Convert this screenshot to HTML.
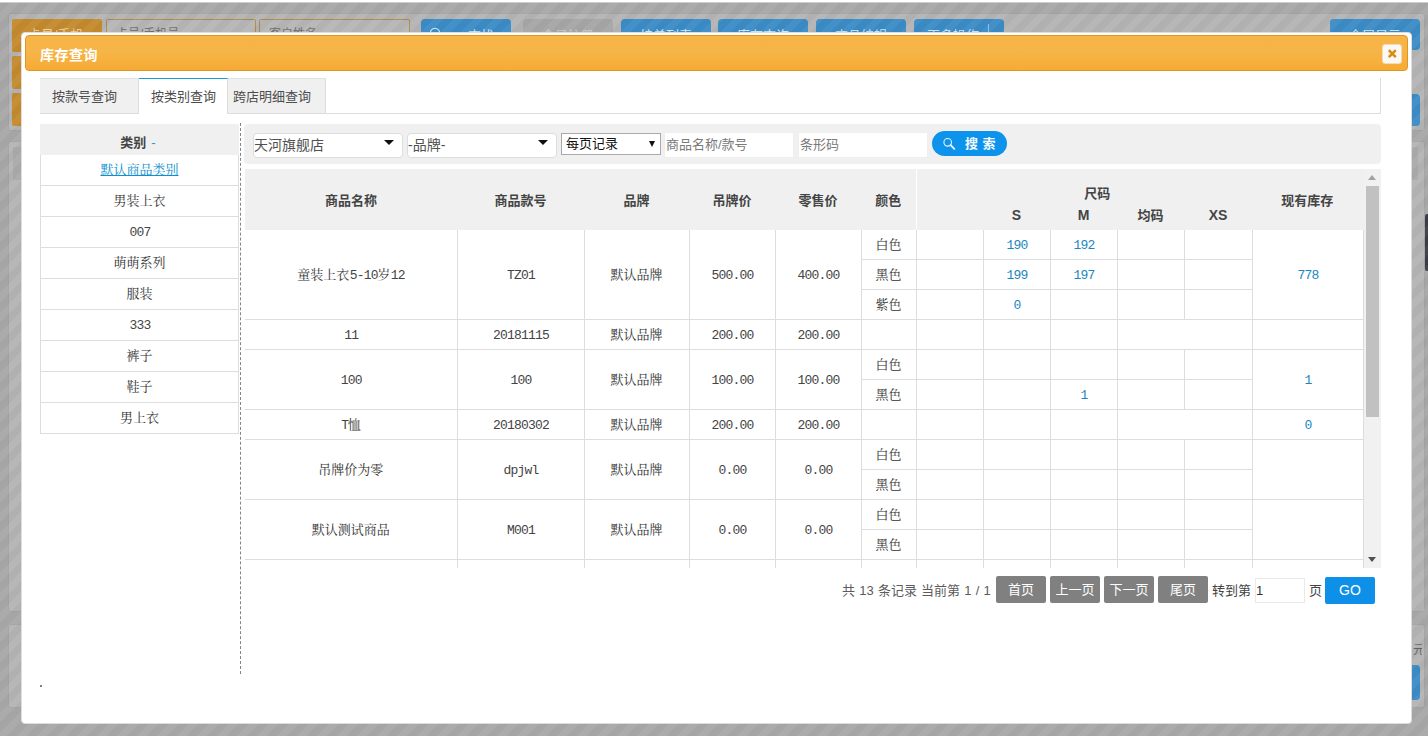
<!DOCTYPE html>
<html lang="zh-CN">
<head>
<meta charset="utf-8">
<title>库存查询</title>
<style>
*{box-sizing:border-box;margin:0;padding:0}
html,body{width:1428px;height:736px;overflow:hidden;background:#fff}
body{position:relative;font-family:"Liberation Sans","Noto Sans CJK SC",sans-serif;font-size:13px;color:#333}
.abs{position:absolute}
/* ---------- page below the overlay (already dimmed colours) ---------- */
#bg{position:absolute;left:0;top:3px;width:1428px;height:733px;background:#a8a8a8}
#bg .band{position:absolute;left:0;top:-1px;width:1428px;height:1px;background:#cdcdcd}
#bg .box{position:absolute;background:#b4b4b4;border:1px solid #a3a3a3;border-radius:3px}
#bg .ob{position:absolute;background:#c48a2e;border-radius:2px}
#bg .ip{position:absolute;background:#b6b6b6;border:1px solid #b08a4a;border-radius:2px;color:#6e6e6e;font-size:12px;line-height:14px;padding:7px 9px}
#bg .bb{position:absolute;background:#3b8cc6;border-radius:4px;color:#cfe3f1;font-size:13px;line-height:16px;text-align:center}
#bg .gb{position:absolute;background:#a6a6a6;border-radius:4px;color:#c6c6c6;font-size:13px;text-align:center}
#stripes{position:absolute;left:0;top:3px;width:1428px;height:733px;
 background:repeating-linear-gradient(135deg,rgba(0,0,0,.02) 0,rgba(0,0,0,.02) 7.07px,rgba(255,255,255,.04) 7.07px,rgba(255,255,255,.04) 14.14px)}
/* ---------- dialog ---------- */
#dlg{position:absolute;left:21px;top:32px;width:1391px;height:692px;background:#fff;border:1px solid #ddd;border-radius:4px}
#tbar{position:absolute;left:3px;top:2px;width:1383px;height:36px;border:1px solid #de9624;border-radius:4px;
 background:linear-gradient(180deg,#f7b446 0,#f6b548 45%,#f6ab34 100%);color:#fff;font-weight:bold;font-size:14px;letter-spacing:.5px;line-height:38px;padding-left:14px}
#close{position:absolute;left:1360px;top:11px;width:20px;height:20px;background:#fbf9f5;border:1px solid #f3dcae;border-radius:3px}

/* tabs */
#tabs{position:absolute;left:18px;top:45px;width:1341px;height:36px;border:1px solid #ddd;border-top:0;background:#fff}
#tabs .tab{position:absolute;top:0;height:35px;background:#f0f0f0;border-right:1px solid #ddd;border-top:1px solid #e2e2e2;color:#4d4d4d;font-size:13px;line-height:35px;text-align:left;padding-left:12px;white-space:nowrap}
#tabs .tab.on{background:#fff;border-top:1px solid #1b9ad6;height:36px}
/* category list */
#cat{position:absolute;left:18px;top:91px;width:199px}
#cat .hd{height:31px;background:#f0f0f0;text-align:center;font-weight:bold;color:#444;line-height:37px;overflow:hidden;font-size:13px;padding-right:3px}
#cat .hd span{color:#1b9ad6;font-weight:normal;margin-left:5px}
#cat ul{list-style:none;border-left:1px solid #ddd;border-right:1px solid #ddd}
#cat li{height:31px;border-bottom:1px solid #ddd;text-align:center;line-height:32px;color:#333}
#cat li a{color:#0e8fcf;text-decoration:underline}
.sim{font-family:"Liberation Mono","Noto Serif CJK SC",serif;font-size:13px}
.sim .l{letter-spacing:-.8px;position:relative;left:.6px;color:#444}
#tb td.n .l{color:#1a86c2}
#vline{position:absolute;left:218px;top:90px;width:0;height:551px;border-left:1px dashed #858585}
#dot{position:absolute;left:18px;top:652px;width:2px;height:2px;background:#555;border-radius:1px}
/* filter bar */
#flt{position:absolute;left:222px;top:91px;width:1137px;height:40px;background:#f0f0f0;border-radius:4px}
#flt .sel{position:absolute;top:9px;height:25px;width:150px;background:#fff;border:1px solid #ddd;border-radius:4px;font-size:14px;line-height:22px;padding-left:0;color:#505050}
#flt .sel:after,#flt .nsel:after{content:"";position:absolute;right:8px;top:6px;border:5px solid transparent;border-top:5px solid #111;border-bottom:0}
#flt .nsel{position:absolute;left:317px;top:9px;height:22px;width:100px;background:#fff;border:1px solid #a9a9a9;font-size:13px;line-height:19px;padding-left:4px;color:#111}
#flt .nsel:after{right:5px;top:7px;border-width:3px;border-top-width:6px}
#flt .inp{position:absolute;top:8px;height:26px;width:130px;background:#fff;border:1px solid #eee;font-size:13px;line-height:24px;padding-left:1px;color:#7a7a7a}
#flt .btn{position:absolute;left:688px;top:7px;width:75px;height:25px;background:#0d93ec;border-radius:13px;color:#f4fbff;font-size:13px;font-weight:bold;line-height:26px;padding-left:33px;letter-spacing:4.5px}

/* table */
#tw{position:absolute;left:223px;top:136px;width:1119px;height:399px;overflow:hidden}
#tb{border-collapse:collapse;table-layout:fixed;width:1118px}
#tb th{background:#f0f0f0;color:#444;font-size:13px;font-weight:bold;text-align:center;vertical-align:middle;padding:0}
#tb td{height:30px;border-right:1px solid #ddd;border-bottom:1px solid #ddd;text-align:center;vertical-align:middle;color:#333;padding:4px 0 0;line-height:16px}
#tb td.n{color:#0e8fcf}
#tb tr.f td{height:29px}
#tb tr.f td[rowspan]{height:89px}
#sb{position:absolute;left:1342px;top:136px;width:17px;height:399px;background:#f1f1f1}
#sb .th{position:absolute;left:2px;top:17px;width:13px;height:231px;background:#c1c1c1}
#sb .up{position:absolute;left:4px;top:6px;border:4px solid transparent;border-bottom:5px solid #a3a3a3;border-top:0}
#sb .dn{position:absolute;left:4px;bottom:6px;border:4px solid transparent;border-top:5px solid #505050;border-bottom:0}
/* pager */
#pg{position:absolute;left:0;top:543px;width:1391px;height:28px;font-size:13px;color:#444}
#pg span{position:absolute;top:0;line-height:30px;white-space:nowrap;word-spacing:.6px}
#pg .b{position:absolute;top:0;height:27px;width:50px;background:#808080;color:#fff;border-radius:2px;text-align:center;line-height:28px;font-size:13px}
#pg .go{position:absolute;left:1303px;top:1px;width:50px;height:27px;background:#0e90e8;color:#fff;border-radius:2px;text-align:center;line-height:27px;font-size:14px}
#pg .pi{position:absolute;left:1233px;top:2px;width:50px;height:25px;border:1px solid #e9e9e9;background:#fff;line-height:23px;padding-left:0;color:#333}
</style>
</head>
<body>
<div id="bg">
  <div class="band"></div>
  <div class="box" style="left:8px;top:10px;width:1417px;height:118px"></div>
  <div class="ob" style="left:12px;top:16px;width:90px;height:33px;color:#e6cfa6;font-size:13px;line-height:16px;padding:8px 0 0 16px">卡号/手机</div>
  <div class="ob" style="left:12px;top:53px;width:90px;height:33px"></div>
  <div class="ob" style="left:12px;top:90px;width:90px;height:33px"></div>
  <div class="ip" style="left:106px;top:16px;width:150px;height:34px">卡号/手机号</div>
  <div class="ip" style="left:259px;top:16px;width:151px;height:34px">客户姓名</div>
  <div class="bb" style="left:421px;top:16px;width:90px;height:34px;padding:9px 0 0 30px">查找<svg style="position:absolute;left:8px;top:8px" width="14" height="14" viewBox="0 0 14 14"><circle cx="6" cy="6" r="4.6" fill="none" stroke="#cfe3f1" stroke-width="1.3"/><path d="M9.5 9.5l3.5 3.5" stroke="#cfe3f1" stroke-width="1.5"/></svg></div>
  <div class="gb" style="left:523px;top:16px;width:90px;height:34px;padding-top:9px;line-height:16px">会员注册</div>
  <div class="bb" style="left:621px;top:16px;width:90px;height:34px;padding-top:9px">挂单列表</div>
  <div class="bb" style="left:718px;top:16px;width:90px;height:34px;padding-top:9px">库存查询</div>
  <div class="bb" style="left:816px;top:16px;width:90px;height:34px;padding-top:9px">商品编辑</div>
  <div class="bb" style="left:914px;top:16px;width:90px;height:34px;padding:9px 12px 0 0">更多操作<span style="position:absolute;left:74px;top:5px;width:1px;height:24px;background:#8fbbdc"></span></div>
  <div class="bb" style="left:1330px;top:16px;width:90px;height:31px;padding-top:9px">全屏显示</div>
  <div class="bb" style="left:1330px;top:91px;width:90px;height:32px"></div>
  <div class="box" style="left:8px;top:138px;width:1417px;height:471px"></div>
  <div style="position:absolute;left:13px;top:144px;width:1405px;height:33px;background:#aaa"></div>
  <div class="box" style="left:8px;top:621px;width:1417px;height:84px"></div>
  <div style="position:absolute;left:1413px;top:637px;width:9px;overflow:hidden;font-size:12px;color:#666">元</div>
  <div style="position:absolute;left:1425px;top:211px;width:6px;height:57px;background:#3d3d47;border-radius:2px"></div>
  <div class="bb" style="left:1330px;top:662px;width:90px;height:35px"></div>
</div>
<div id="stripes"></div>

<div id="dlg">
  <div id="tbar">库存查询</div>
  <div id="close"><svg width="18" height="18" viewBox="0 0 18 18" style="position:absolute;left:0;top:0"><path d="M5.8 5.2l7 7M12.8 5.2l-7 7" stroke="#de8a12" stroke-width="2.6"/></svg></div>

  <div id="tabs">
    <div class="tab" style="left:-1px;width:99px">按款号查询</div>
    <div class="tab on" style="left:98px;width:89px">按类别查询</div>
    <div class="tab" style="left:187px;width:98px;padding-left:5px">跨店明细查询</div>
  </div>
  <div id="cat">
    <div class="hd">类别<span>-</span></div>
    <ul class="sim">
      <li><a>默认商品类别</a></li>
      <li>男装上衣</li>
      <li><span class="l">007</span></li>
      <li>萌萌系列</li>
      <li>服装</li>
      <li><span class="l">333</span></li>
      <li>裤子</li>
      <li>鞋子</li>
      <li>男上衣</li>
    </ul>
  </div>
  <div id="vline"></div>
  <div id="dot"></div>
  <div id="flt">
    <div class="sel" style="left:9px">天河旗舰店</div>
    <div class="sel" style="left:163px">-品牌-</div>
    <div class="nsel">每页记录</div>
    <div class="inp" style="left:420px">商品名称/款号</div>
    <div class="inp" style="left:554px">条形码</div>
    <div class="btn">搜索<svg style="position:absolute;left:11px;top:6px" width="14" height="14" viewBox="0 0 14 14"><circle cx="4.7" cy="5.3" r="3.8" fill="none" stroke="#e8f6ff" stroke-width="1.1"/><path d="M7.6 8.1l3.7 3.7" stroke="#e8f6ff" stroke-width="1.9" stroke-linecap="round"/></svg></div>
  </div>

  <div id="tw">
  <table id="tb" class="sim">
    <colgroup><col style="width:212px"><col style="width:127px"><col style="width:105px"><col style="width:86px"><col style="width:86px"><col style="width:55px"><col style="width:67px"><col style="width:67px"><col style="width:67px"><col style="width:67px"><col style="width:68px"><col style="width:111px"></colgroup>
    <thead style="font-family:'Liberation Sans','Noto Sans CJK SC',sans-serif;letter-spacing:0">
      <tr style="height:38px"><th rowspan="2">商品名称</th><th rowspan="2">商品款号</th><th rowspan="2">品牌</th><th rowspan="2">吊牌价</th><th rowspan="2">零售价</th><th rowspan="2" style="border-right:1px solid #fff">颜色</th><th colspan="5" style="vertical-align:bottom;line-height:20px;padding:0 0 3px 26px">尺码</th><th rowspan="2" style="border-right:1px solid #f0f0f0">现有库存</th></tr>
      <tr style="height:23px"><th></th><th style="vertical-align:top;font-size:14px;padding-top:0">S</th><th style="vertical-align:top;font-size:14px;padding-top:0">M</th><th style="vertical-align:top"><span style="position:relative;top:-2px">均码</span></th><th style="vertical-align:top;font-size:14px;padding-top:0">XS</th></tr>
    </thead>
    <tbody>
<tr class="f"><td rowspan="3">童装上衣<span class="l">5-10</span>岁<span class="l">12</span></td><td rowspan="3"><span class="l">TZ01</span></td><td rowspan="3">默认品牌</td><td rowspan="3"><span class="l">500.00</span></td><td rowspan="3"><span class="l">400.00</span></td><td>白色</td><td></td><td class="n"><span class="l">190</span></td><td class="n"><span class="l">192</span></td><td></td><td></td><td rowspan="3" class="n"><span class="l">778</span></td></tr>
<tr><td>黑色</td><td></td><td class="n"><span class="l">199</span></td><td class="n"><span class="l">197</span></td><td></td><td></td></tr>
<tr><td>紫色</td><td></td><td class="n"><span class="l">0</span></td><td></td><td></td><td></td></tr>
<tr><td><span class="l">11</span></td><td><span class="l">20181115</span></td><td>默认品牌</td><td><span class="l">200.00</span></td><td><span class="l">200.00</span></td><td></td><td></td><td></td><td></td><td colspan="2"></td><td></td></tr>
<tr><td rowspan="2"><span class="l">100</span></td><td rowspan="2"><span class="l">100</span></td><td rowspan="2">默认品牌</td><td rowspan="2"><span class="l">100.00</span></td><td rowspan="2"><span class="l">100.00</span></td><td>白色</td><td></td><td></td><td></td><td></td><td></td><td rowspan="2" class="n"><span class="l">1</span></td></tr>
<tr><td>黑色</td><td></td><td></td><td class="n"><span class="l">1</span></td><td></td><td></td></tr>
<tr><td><span class="l">T</span>恤</td><td><span class="l">20180302</span></td><td>默认品牌</td><td><span class="l">200.00</span></td><td><span class="l">200.00</span></td><td></td><td></td><td></td><td></td><td colspan="2"></td><td class="n"><span class="l">0</span></td></tr>
<tr><td rowspan="2">吊牌价为零</td><td rowspan="2"><span class="l">dpjwl</span></td><td rowspan="2">默认品牌</td><td rowspan="2"><span class="l">0.00</span></td><td rowspan="2"><span class="l">0.00</span></td><td>白色</td><td></td><td></td><td></td><td></td><td></td><td rowspan="2"></td></tr>
<tr><td>黑色</td><td></td><td></td><td></td><td></td><td></td></tr>
<tr><td rowspan="2">默认测试商品</td><td rowspan="2"><span class="l">M001</span></td><td rowspan="2">默认品牌</td><td rowspan="2"><span class="l">0.00</span></td><td rowspan="2"><span class="l">0.00</span></td><td>白色</td><td></td><td></td><td></td><td></td><td></td><td rowspan="2"></td></tr>
<tr><td>黑色</td><td></td><td></td><td></td><td></td><td></td></tr>
<tr><td rowspan="2">默认测试商品<span class="l">2</span></td><td rowspan="2"><span class="l">M002</span></td><td rowspan="2">默认品牌</td><td rowspan="2"><span class="l">0.00</span></td><td rowspan="2"><span class="l">0.00</span></td><td>白色</td><td></td><td></td><td></td><td></td><td></td><td rowspan="2"></td></tr>
<tr><td>黑色</td><td></td><td></td><td></td><td></td><td></td></tr>
    </tbody>
  </table>
  </div>
  <div id="sb"><div class="up"></div><div class="th"></div><div class="dn"></div></div>
  <div id="pg">
    <span style="left:820px;color:#5c5c5c">共 13 条记录 当前第 1 / 1</span>
    <div class="b" style="left:974px">首页</div>
    <div class="b" style="left:1028px">上一页</div>
    <div class="b" style="left:1082px">下一页</div>
    <div class="b" style="left:1136px">尾页</div>
    <span style="left:1190px">转到第</span>
    <div class="pi">1</div>
    <span style="left:1287px">页</span>
    <div class="go">GO</div>
  </div>
</div>
</body>
</html>
